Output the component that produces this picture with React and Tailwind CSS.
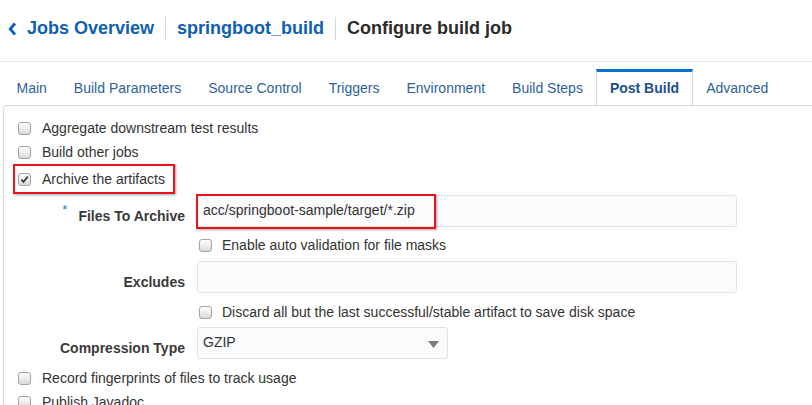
import React from 'react';

const tabs = ['Main', 'Build Parameters', 'Source Control', 'Triggers', 'Environment', 'Build Steps', 'Post Build', 'Advanced'];

// Alta-style grey checkbox
const Check = ({ checked }) => (
  <span className="inline-flex items-center justify-center w-[13px] h-[13px] shrink-0 rounded-[3px] border border-[#a3a3a3] bg-gradient-to-b from-[#fefefe] to-[#dadada]">
    {checked && (
      <svg width="9" height="9" viewBox="0 0 9 9">
        <path d="M1.3 4.6 L3.5 6.9 L7.8 1.6" fill="none" stroke="#3a3a3a" strokeWidth="1.7" />
      </svg>
    )}
  </span>
);

const CheckRow = ({ label, checked, className = '', gap = 'ml-[11px]' }) => (
  <div className={`flex items-center h-[24px] ${className}`}>
    <Check checked={checked} />
    <span className={`${gap} text-[14px] text-[#333]`}>{label}</span>
  </div>
);

export default function App() {
  return (
    <div className="w-[812px] h-[405px] overflow-hidden bg-white" style={{ fontFamily: '"Liberation Sans", Arial, sans-serif' }}>
      {/* breadcrumb header */}
      <div className="h-[62px] border-b border-[#e3e6ea] flex items-start pt-[16px] pl-[8px] text-[18px] font-bold leading-[24px]">
        <svg width="9" height="14" viewBox="0 0 9 14" className="mt-[6px]">
          <path d="M7 1.5 L2.2 7 L7 12.5" fill="none" stroke="#0f5fb2" strokeWidth="2.8" />
        </svg>
        <span className="ml-[10px] text-[#0f5fb2]">Jobs Overview</span>
        <span className="w-px h-[23px] bg-[#d3d9df] mx-[11px] mt-px" />
        <span className="text-[#0f5fb2]">springboot_build</span>
        <span className="w-px h-[23px] bg-[#d3d9df] mx-[11px] mt-px" />
        <span className="text-[#2b2b2b]">Configure build job</span>
      </div>

      {/* tabs */}
      <div className="flex pl-[3px] pt-[7px] relative z-10">
        {tabs.map((t) =>
          t === 'Post Build' ? (
            <div key={t} className="h-[36px] px-[12.5px] border-x border-t-[3px] border-x-[#d4dae0] border-t-[#0572ce] bg-white -mb-px pb-px flex items-center text-[14px] font-bold text-[#1d4f8c]">
              {t}
            </div>
          ) : (
            <div key={t} className="h-[36px] px-[12.5px] border-x border-transparent pt-[3px] flex items-center text-[14px] text-[#2d5f9e]">
              {t}
            </div>
          )
        )}
      </div>

      {/* post build panel */}
      <div className="ml-[3px] border-l border-t border-[#d4dae0] rounded-tl-[4px] h-[400px] pt-[10px]">
        <CheckRow label="Aggregate downstream test results" className="ml-[14px]" />
        <CheckRow label="Build other jobs" className="ml-[14px] h-[23px]" />
        <div className="ml-[9px] inline-flex items-center h-[30px] pl-[3px] pr-[8px] border-2 border-[#e8141b] shadow-[1px_1px_2px_rgba(0,0,0,0.35)]">
          <Check checked />
          <span className="ml-[11px] text-[14px] text-[#333]">Archive the artifacts</span>
        </div>

        {/* Files To Archive */}
        <div className="flex items-end mt-[1px]">
          <div className="w-[181px] flex justify-end items-start pb-[2px]">
            <span className="text-[#2e7bc4] text-[13px] leading-[12px] mr-[11px] -mt-[3px] self-start">*</span>
            <span className="text-[14px] font-bold text-[#3a3a3a] leading-[18px]">Files To Archive</span>
          </div>
          <div className="relative ml-[12px] w-[540px] h-[32px] rounded-[3px] border border-[#dde2e6] bg-[#fafbfd] flex items-center pl-[5px] pb-px text-[14px] text-[#333]">
            acc/springboot-sample/target/*.zip
            <div className="absolute left-[-2px] top-[-2px] w-[240px] h-[35px] border-2 border-[#e8141b] shadow-[1px_1px_2px_rgba(0,0,0,0.35)]" />
          </div>
        </div>

        <CheckRow label="Enable auto validation for file masks" className="ml-[195px] mt-[6px]" gap="ml-[10px]" />

        {/* Excludes */}
        <div className="flex items-end mt-[4px]">
          <div className="w-[181px] text-right pb-[2px] text-[14px] font-bold text-[#3a3a3a] leading-[18px]">Excludes</div>
          <div className="ml-[12px] w-[540px] h-[32px] rounded-[3px] border border-[#dde2e6] bg-[#fafbfd]" />
        </div>

        <CheckRow label="Discard all but the last successful/stable artifact to save disk space" className="ml-[195px] mt-[7px]" gap="ml-[10px]" />

        {/* Compression Type */}
        <div className="flex items-end mt-[3px]">
          <div className="w-[181px] text-right pb-[2px] text-[14px] font-bold text-[#3a3a3a] leading-[18px]">Compression Type</div>
          <div className="ml-[12px] w-[251px] h-[32px] rounded-[3px] border border-[#dde2e6] bg-[#fafbfd] flex items-center justify-between pl-[5px] pr-[8px] pb-px text-[14px] text-[#333]">
            <span>GZIP</span>
            <svg width="11" height="7" viewBox="0 0 11 7" className="mt-[3px]">
              <path d="M0 0 H11 L5.5 7 Z" fill="#7b7b7b" />
            </svg>
          </div>
        </div>

        <CheckRow label="Record fingerprints of files to track usage" className="ml-[14px] mt-[7px]" />
        <CheckRow label="Publish Javadoc" className="ml-[14px] h-[23px]" />
      </div>
    </div>
  );
}
